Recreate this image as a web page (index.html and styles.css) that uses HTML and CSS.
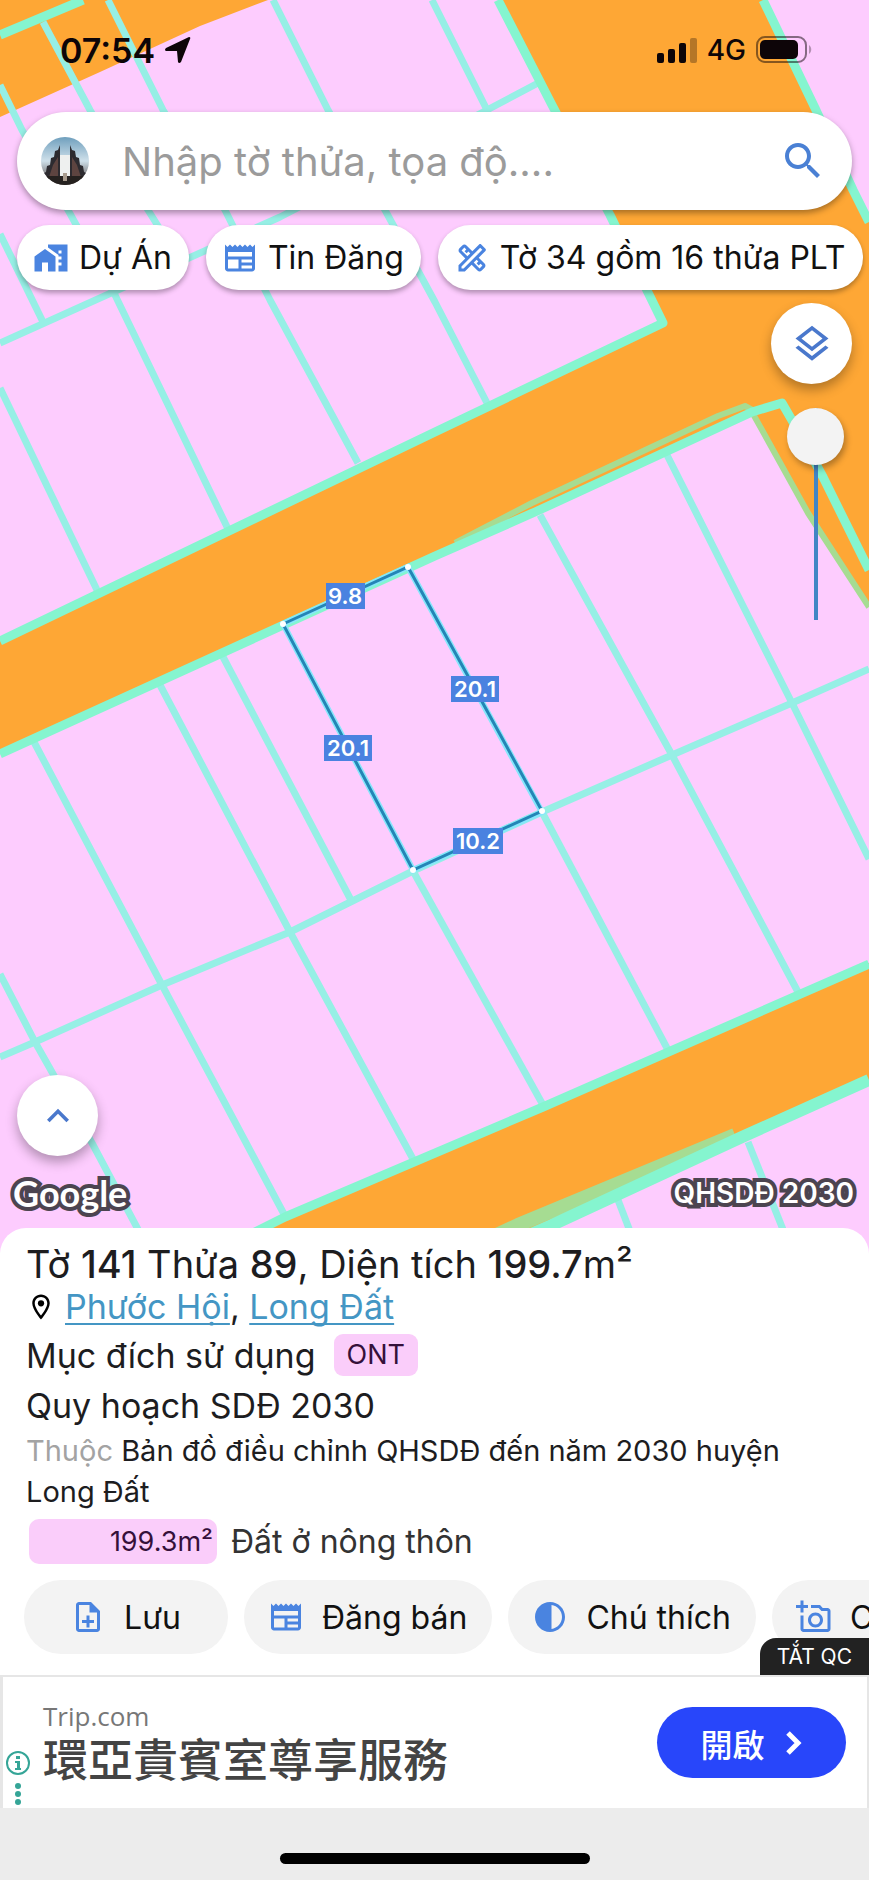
FILE: index.html
```html
<!DOCTYPE html>
<html lang="vi">
<head>
  <meta charset="UTF-8" />
  <meta name="viewport" content="width=device-width, initial-scale=1.0"/>
  <title>Bản đồ quy hoạch</title>
  <link rel="stylesheet" href="styles.css">
</head>
<body>

<!-- shared icons -->
<svg class="sprite" aria-hidden="true">
  <symbol id="i-news" viewBox="0 0 24 24"><path fill-rule="evenodd" d="M22 3l-1.67 1.67L18.67 3 17 4.67 15.33 3l-1.66 1.67L12 3l-1.67 1.67L8.67 3 7 4.67 5.33 3 3.67 4.67 2 3v16c0 1.1.9 2 2 2h16c1.1 0 2-.9 2-2V3zM11 19H4v-6h7v6zm9 0h-7v-2h7v2zm0-4h-7v-2h7v2zm0-4H4V8h16v3z"/></symbol>
</svg>

<div class="app">
  <main class="map">
    <svg class="map-canvas" viewBox="0 0 869 1252" preserveAspectRatio="xMidYMin slice">
      <rect class="land" width="869" height="1252"/>

      <!-- roads -->
      <g class="road">
        <path d="M0 0H268L200 26 100 72 0 117z"/>
        <path d="M498 0H763L815 108 853 190 869 220V607L808 513 752 412 535 512 435 555 0 753V641L663 322 610 215z"/>
        <path d="M215 1252L285 1218 543 1108 869 963V1080L742 1137 490 1252z"/>
      </g>

      <!-- plot borders -->
      <g class="plot">
        <path d="M43 22L90 110 148 210 178 258"/>
        <path d="M0 85L22 130 68 210 115 295 229 531"/>
        <path d="M108 0L163 110 225 210 270 300 358 463"/>
        <path d="M273 0L328 110 385 210 435 302 487 403"/>
        <path d="M432 0L487 110 540 82"/>
        <path d="M0 234L43 322"/>
        <path d="M0 343L100 298 280 217 487 110"/>
        <path d="M0 388L97 590"/>
        <path d="M0 1057L35 1042 162 985 290 932 413 871 542 812 672 755 792 703 869 669"/>
        <path d="M34 742L162 985 285 1216"/>
        <path d="M160 685L290 932 413 1159"/>
        <path d="M222 655L352 902"/>
        <path d="M413 871L543 1105"/>
        <path d="M540 515L672 755 798 992"/>
        <path d="M542 812L668 1050"/>
        <path d="M667 455L792 703 869 859"/>
        <path d="M0 974L35 1042 92 1143 150 1252"/>
        <path d="M748 1142L792 1252"/>
        <path d="M618 1200L638 1252"/>
      </g>

      <!-- road borders -->
      <g class="kerb">
        <path class="faint" d="M455 543L532 503 718 416 745 406 756 412"/>
        <path class="faint" d="M752 412L808 513 869 607"/>
        <path class="faint wide" d="M460 1252L518 1225 735 1135"/>
        <path d="M0 35L83 0"/>
        <path d="M498 0L552 105 610 215 663 323 435 432 0 641"/>
        <path d="M763 0L815 108 853 190 869 222"/>
        <path d="M0 754L435 556 535 512 752 412 782 403 793 422 823 477 869 570"/>
        <path d="M215 1252L285 1217 543 1107 869 964"/>
        <path class="wide" d="M490 1252L552 1225 742 1137 869 1080"/>
      </g>

      <!-- selected plot -->
      <path class="glow" d="M283 624L408 567 542 812 413 870z"/>
      <path class="selected" d="M283 624L408 567 542 811 413 870z"/>
      <g class="corner">
        <circle cx="283" cy="624" r="3"/>
        <circle cx="408" cy="567" r="3"/>
        <circle cx="542" cy="811" r="3"/>
        <circle cx="413" cy="870" r="3"/>
      </g>
      <g class="measure">
        <rect x="326" y="583" width="39" height="26"/><text x="345" y="604">9.8</text>
        <rect x="324" y="735" width="48" height="26"/><text x="348" y="756">20.1</text>
        <rect x="451" y="676" width="48" height="26"/><text x="475" y="697">20.1</text>
        <rect x="453" y="828" width="50" height="26"/><text x="478" y="849">10.2</text>
      </g>
    </svg>

    <header class="status">
      <span class="clock">07:54</span>
      <svg class="locate" viewBox="0 0 26 26"><path d="M25 2Q26 0 24 0L1 11Q-1 13 1 14L12 14 13 25Q14 27 16 25z"/></svg>
      <svg class="signal" viewBox="0 0 40 26">
        <rect y="16" width="7" height="10" rx="2"/>
        <rect x="11" y="12" width="7" height="14" rx="2"/>
        <rect x="22" y="6" width="7" height="20" rx="2"/>
        <rect class="off" x="33" y="1" width="7" height="25" rx="2"/>
      </svg>
      <span class="network">4G</span>
      <svg class="battery" viewBox="0 0 56 28">
        <rect class="shell" x="1" y="1" width="49" height="25" rx="8"/>
        <rect x="4" y="4" width="38" height="19" rx="5"/>
        <path class="off" d="M53 9c3 2 3 7 0 9z"/>
      </svg>
    </header>

    <form class="search">
      <svg class="avatar" viewBox="0 0 48 48">
        <defs>
          <linearGradient id="sky" x1="0" y1="0" x2="0" y2="1">
            <stop offset="0" stop-color="#6f9fbd"/>
            <stop offset=".5" stop-color="#cfe0ea"/>
            <stop offset="1" stop-color="#4a3c38"/>
          </linearGradient>
          <clipPath id="round"><circle cx="24" cy="24" r="24"/></clipPath>
        </defs>
        <g clip-path="url(#round)">
          <rect width="48" height="48" fill="url(#sky)"/>
          <path d="M19 8v34H1l2-6 2-1 1-6 3-1 1-7 3-1 1-6 3-1zM29 8v34h18l-2-6-2-1-1-6-3-1-1-7-3-1-1-6-3-1z" fill="#2d2b30"/>
          <path d="M17 20v20H8l4-12zM31 20v20h9l-4-12z" fill="#5d4440"/>
          <path d="M19 18h10v22H19z" fill="#eef0ef"/>
          <path d="M3 39h42v9H3z" fill="#25211f"/>
          <path d="M22 36h4v8h-4z" fill="#a79a8c"/>
        </g>
      </svg>
      <input type="text" aria-label="Tìm kiếm" placeholder="Nhập tờ thửa, tọa độ....">
      <button type="button" aria-label="Tìm">
        <svg viewBox="0 0 24 24"><path d="M15.500 14h-.79l-.28-.27C15.410 12.590 16 11.110 16 9.500 16 5.910 13.090 3 9.500 3S3 5.910 3 9.500 5.910 16 9.500 16c1.610 0 3.090-.59 4.230-1.570l.27.28v.79l5 4.990L20.490 19l-4.990-5zm-6 0C7.010 14 5 11.990 5 9.500S7.010 5 9.500 5 14 7.010 14 9.500 11.990 14 9.500 14z"/></svg>
      </button>
    </form>

    <nav class="chips">
      <button class="chip">
        <svg class="icon" viewBox="0 0 24 24"><path d="M1 11v10h5v-6h4v6h5V11L8 6z"/><path fill-rule="evenodd" d="M10 3v1.970l7 5V11h2v2h-2v2h2v2h-2v4h6V3H10zm9 6h-2V7h2v2z"/></svg>
        Dự Án
      </button>
      <button class="chip">
        <svg class="icon"><use href="#i-news"/></svg>
        Tin Đăng
      </button>
      <button class="chip">
        <svg class="icon" viewBox="0 0 24 24"><path d="M20.970 7.270c.39-.39.39-1.020 0-1.410l-2.830-2.830c-.39-.39-1.020-.39-1.410 0l-4.490 4.490-3.890-3.890c-.78-.78-2.050-.78-2.830 0l-1.900 1.900c-.78.78-.78 2.050 0 2.830l3.890 3.890L3 16.760V21h4.240l4.520-4.520 3.890 3.890c.95.95 2.230.6 2.830 0l1.900-1.900c.78-.78.78-2.050 0-2.830l-3.890-3.890 4.480-4.480zM5.040 6.940l1.890-1.900L8.200 6.310 7.020 7.500l1.410 1.410 1.190-1.190 1.200 1.200-1.900 1.900-3.880-3.880zm11.230 7.440l-1.190 1.190 1.410 1.410 1.190-1.190 1.270 1.270-1.900 1.900-3.890-3.890 1.900-1.900 1.210 1.210zM6.410 19H5v-1.410l9.610-9.610 1.300 1.300.11.11L6.410 19zm9.610-9.610l-1.410-1.410 2.830-2.830 1.410 1.410-2.830 2.830z"/></svg>
        Tờ 34 gồm 16 thửa PLT
      </button>
    </nav>

    <div class="tools">
      <button class="fab" aria-label="Lớp bản đồ">
        <svg viewBox="0 0 24 24"><path fill-rule="evenodd" d="M11.990 18.540l-7.370-5.730L3 14.070l9 7 9-7-1.630-1.270zM12 16l7.360-5.730L21 9l-9-7-9 7 1.630 1.270L12 16zm0-11.470L17.740 9 12 13.470 6.260 9 12 4.530z"/></svg>
      </button>
      <input class="opacity" type="range" min="0" max="100" value="0" aria-label="Độ mờ">
    </div>

    <button class="fab expand" aria-label="Mở rộng">
      <svg viewBox="0 0 24 24"><path d="M7.410 15.410L12 10.830l4.590 4.580L18 14l-6-6-6 6z"/></svg>
    </button>

    <div class="credits">
      <span class="google">Google</span>
      <span class="layer-name">QHSDĐ 2030</span>
    </div>
  </main>

  <section class="sheet">
    <h1>Tờ <b>141</b> Thửa <b>89</b>, Diện tích <b>199.7</b>m²</h1>
    <p class="place">
      <svg viewBox="0 0 24 24"><path fill-rule="evenodd" d="M12 2C8.130 2 5 5.130 5 9c0 5.250 7 13 7 13s7-7.750 7-13c0-3.870-3.130-7-7-7zM7 9c0-2.760 2.240-5 5-5s5 2.240 5 5c0 2.880-2.880 7.190-5 9.880C9.920 16.210 7 11.850 7 9z"/><circle cx="12" cy="9" r="2.500"/></svg>
      <span><a href="#">Phước Hội</a>, <a href="#">Long Đất</a></span>
    </p>
    <p class="purpose">Mục đích sử dụng <span class="code">ONT</span></p>
    <h2>Quy hoạch SDĐ 2030</h2>
    <p class="source"><span>Thuộc</span> Bản đồ điều chỉnh QHSDĐ đến năm 2030 huyện Long Đất</p>
    <p class="area"><span>199.3m²</span> Đất ở nông thôn</p>

    <div class="actions">
      <button>
        <svg class="icon" viewBox="0 0 24 24"><path fill-rule="evenodd" d="M14 2H6c-1.100 0-2 .9-2 2v16c0 1.100.9 2 2 2h12c1.100 0 2-.9 2-2V8zM6 20V4h7v5h5v11z"/><path d="M11 11h2v3h3v2h-3v3h-2v-3H8v-2h3z"/></svg>
        Lưu
      </button>
      <button>
        <svg class="icon"><use href="#i-news"/></svg>
        Đăng bán
      </button>
      <button>
        <svg class="icon" viewBox="0 0 24 24"><path fill-rule="evenodd" d="M12 22c5.520 0 10-4.480 10-10S17.520 2 12 2 2 6.480 2 12s4.480 10 10 10zm1-17.930c3.940.49 7 3.850 7 7.930s-3.050 7.440-7 7.930z"/></svg>
        Chú thích
      </button>
      <button>
        <svg class="icon" viewBox="0 0 24 24"><path fill-rule="evenodd" d="M21 6h-3.170L16 4h-6v2h5.120l1.830 2H21v12H5v-9H3v9c0 1.100.9 2 2 2h16c1.100 0 2-.9 2-2V8c0-1.100-.9-2-2-2zM8 14c0 2.760 2.240 5 5 5s5-2.240 5-5-2.240-5-5-5-5 2.240-5 5zm5-3c1.650 0 3 1.350 3 3s-1.350 3-3 3-3-1.350-3-3 1.350-3 3-3zM5 6h3V4H5V1H3v3H0v2h3v3h2z"/></svg>
        Chụp ảnh
      </button>
    </div>
    <button class="hide-ad">TẮT QC</button>
  </section>

  <aside class="ad">
    <svg class="ad-info" viewBox="0 0 26 56">
      <circle class="ring" cx="13" cy="13" r="11"/>
      <path d="M11 6h4v3h-4zM10 11h5v7h1v2h-6v-2h2v-5h-2z"/>
      <circle cx="13" cy="36" r="3"/><circle cx="13" cy="44" r="3"/><circle cx="13" cy="52" r="3"/>
    </svg>
    <div class="ad-text">
      <span>Trip.com</span>
      <strong lang="zh-Hant">環亞貴賓室尊享服務</strong>
    </div>
    <a class="ad-open" href="#" lang="zh-Hant">
      開啟
      <svg viewBox="0 0 18 26"><path d="M3 3l10 10L3 23"/></svg>
    </a>
  </aside>

  <footer><div class="home-bar"></div></footer>
</div>

</body>
</html>
```
FILE: styles.css
```css
* {
  margin: 0;
  padding: 0;
  box-sizing: border-box;
}

body {
  font-family: Inter, "Liberation Sans", sans-serif;
  color: #1d1d1f;
  background: #ececec;
}

button {
  border: none;
  font: inherit;
  color: #111;
  cursor: pointer;
}

svg {
  display: block;
  flex: none;
}

.sprite {
  position: absolute;
  width: 0;
  height: 0;
}

.app {
  min-height: 100vh;
  display: flex;
  flex-direction: column;
  overflow: hidden;
}

.icon {
  width: 36px;
  height: 36px;
  fill: #4a84e0;
}

/* map */
.map {
  position: relative;
  flex: 1;
  display: flex;
  flex-direction: column;
  padding: 0 17px 40px;
}

.map-canvas {
  position: absolute;
  inset: 0;
  width: 100%;
  height: 100%;
}

.map > *:not(.map-canvas) {
  position: relative;
}

.land { fill: #fdccfe; }
.road { fill: #fea735; }

.plot,
.kerb {
  fill: none;
  stroke: #96efe5;
  stroke-width: 7;
  stroke-linejoin: round;
}

.kerb {
  stroke: #85f5cf;
  stroke-width: 9;
}

.kerb .wide { stroke-width: 12; }

.kerb .faint {
  stroke: #a6dc92;
  stroke-width: 6;
}

.kerb .faint.wide { stroke-width: 14; }

.glow,
.selected {
  fill: none;
  stroke: #86e6fb;
  stroke-width: 6;
}

.selected {
  stroke: #2485b6;
  stroke-width: 3;
}

.corner { fill: #fff; }
.measure rect { fill: #4a82e0; }

.measure text {
  fill: #fff;
  font-size: 22px;
  font-weight: 600;
  text-anchor: middle;
}

/* status bar */
.status {
  display: flex;
  align-items: center;
  height: 100px;
  margin-bottom: 12px;
  padding: 0 40px 0 43px;
  color: #0d0508;
}

.status svg { fill: #0d0508; }

.clock {
  font-size: 34px;
  font-weight: 600;
}

.locate {
  width: 26px;
  height: 26px;
  margin: 0 auto 0 10px;
}

.signal {
  width: 40px;
  height: 26px;
}

.status .off { opacity: .3; }

.network {
  margin: 0 10px;
  font-size: 28px;
  font-weight: 500;
}

.battery {
  width: 56px;
  height: 28px;
}

.status .shell {
  fill: none;
  stroke: #0d0508;
  stroke-width: 2;
  opacity: .5;
}

/* search */
.search {
  display: flex;
  align-items: center;
  height: 98px;
  padding: 0 25px 0 24px;
  border-radius: 49px;
  background: #fff;
  box-shadow: 0 3px 6px rgba(0, 0, 0, .35);
}

.avatar {
  width: 48px;
  height: 48px;
}

.search input {
  flex: 1;
  min-width: 0;
  margin-left: 33px;
  border: none;
  outline: none;
  background: none;
  font: inherit;
  font-size: 40px;
}

.search input::placeholder { color: #9b9b9b; }

.search button { background: none; }

.search button svg {
  width: 48px;
  height: 48px;
  fill: #4a80d4;
}

/* chips */
.chips {
  display: flex;
  gap: 17px;
  margin: 15px -17px 0 0;
}

.chip {
  display: flex;
  align-items: center;
  gap: 10px;
  height: 65px;
  padding: 0 17px 0 16px;
  border-radius: 33px;
  background: #fff;
  font-size: 32px;
  white-space: nowrap;
  box-shadow: 0 3px 5px rgba(0, 0, 0, .3);
}

/* map tools */
.tools {
  display: flex;
  flex-direction: column;
  align-items: flex-end;
  margin-top: 13px;
}

.fab {
  display: flex;
  align-items: center;
  justify-content: center;
  width: 81px;
  height: 81px;
  border-radius: 50%;
  background: #fff;
  box-shadow: 0 6px 12px rgba(0, 0, 0, .3);
}

.fab svg {
  width: 44px;
  height: 44px;
  fill: #4a78cc;
}

.opacity {
  appearance: none;
  writing-mode: vertical-lr;
  width: 57px;
  height: 212px;
  margin: 24px 8px 0 0;
  background: linear-gradient(#4285c4, #4285c4) center / 4px 100% no-repeat;
}

.opacity::-webkit-slider-thumb {
  appearance: none;
  width: 57px;
  height: 57px;
  border-radius: 50%;
  background: #f3f3f3;
  box-shadow: 2px 4px 6px rgba(0, 0, 0, .3);
}

.expand { margin-top: auto; }

.credits {
  display: flex;
  align-items: center;
  justify-content: space-between;
  height: 37px;
  margin: 19px -2px 0 -4px;
  color: #fff;
  line-height: 37px;
  -webkit-text-stroke: 8px #4c4450;
  paint-order: stroke fill;
}

.google {
  font-family: Lato, sans-serif;
  font-size: 36px;
  font-weight: 700;
}

.layer-name {
  font-size: 28px;
  font-weight: 600;
}

/* bottom sheet */
.sheet {
  position: relative;
  margin-top: -24px;
  padding: 14px 26px 21px;
  border-radius: 26px 26px 0 0;
  background: #fff;
}

.sheet h1 {
  font-size: 38px;
  font-weight: 400;
  line-height: 44px;
}

.sheet h1 b { font-weight: 500; }

.place {
  display: flex;
  align-items: center;
  gap: 9px;
  font-size: 34px;
  line-height: 42px;
}

.place svg {
  width: 30px;
  height: 30px;
}

.place a {
  color: #4496c4;
  text-decoration-thickness: 2px;
  text-underline-offset: 4px;
  text-decoration-skip-ink: none;
}

.purpose {
  display: flex;
  align-items: center;
  gap: 18px;
  height: 54px;
  font-size: 34px;
}

.code {
  padding: 0 13px;
  border-radius: 9px;
  background: #facdfa;
  color: #35103a;
  font-size: 27px;
  line-height: 42px;
}

.sheet h2 {
  font-size: 34px;
  font-weight: 400;
  line-height: 48px;
}

.source {
  font-size: 29px;
  line-height: 41px;
}

.source span { color: #a3a3a3; }

.area {
  display: flex;
  align-items: center;
  gap: 14px;
  margin: 7px 0 16px 3px;
  font-size: 32px;
  color: #333;
}

.area span {
  width: 188px;
  padding-right: 4px;
  border-radius: 10px;
  background: #facdfa;
  color: #35103a;
  font-size: 27px;
  line-height: 45px;
  text-align: right;
}

.actions {
  display: flex;
  gap: 16px;
  margin: 0 -26px 0 -2px;
  overflow: hidden;
}

.actions button {
  display: flex;
  flex: none;
  align-items: center;
  justify-content: center;
  gap: 18px;
  min-width: 204px;
  height: 74px;
  padding: 0 25px 0 24px;
  border-radius: 37px;
  background: #f3f3f3;
  font-size: 32px;
  white-space: nowrap;
}

.sheet .hide-ad {
  position: absolute;
  right: 0;
  bottom: 0;
  height: 37px;
  padding: 0 17px;
  border-radius: 16px 0 0 0;
  background: #222;
  color: #fff;
  font-size: 21px;
}

/* ad banner */
.ad {
  display: flex;
  align-items: center;
  height: 133px;
  padding: 0 21px 0 2px;
  border: solid #e6e6e6;
  border-width: 2px 2px 0 3px;
  background: #fff;
}

.ad-info {
  align-self: flex-end;
  width: 26px;
  height: 56px;
  margin-bottom: 2px;
  fill: #35a597;
}

.ad-info .ring {
  fill: none;
  stroke: #35a597;
  stroke-width: 2;
}

.ad-text {
  flex: 1;
  display: flex;
  flex-direction: column;
  margin-left: 12px;
  font-family: "Open Sans", sans-serif;
  font-size: 26px;
  line-height: 30px;
  color: #777;
}

.ad-text strong {
  font-family: "Noto Sans CJK TC", sans-serif;
  font-size: 45px;
  font-weight: 500;
  line-height: 54px;
  color: #444;
}

.ad-open {
  display: flex;
  align-items: center;
  justify-content: center;
  gap: 20px;
  width: 189px;
  height: 71px;
  border-radius: 36px;
  background: #2846fa;
  color: #fff;
  font-family: "Noto Sans CJK TC", sans-serif;
  font-size: 32px;
  font-weight: 500;
  text-decoration: none;
}

.ad-open svg {
  width: 18px;
  height: 26px;
  fill: none;
  stroke: #fff;
  stroke-width: 5;
}

footer {
  display: flex;
  justify-content: center;
  padding: 45px 0 16px;
  background: #ececec;
}

.home-bar {
  width: 310px;
  height: 11px;
  border-radius: 6px;
  background: #000;
}
```
